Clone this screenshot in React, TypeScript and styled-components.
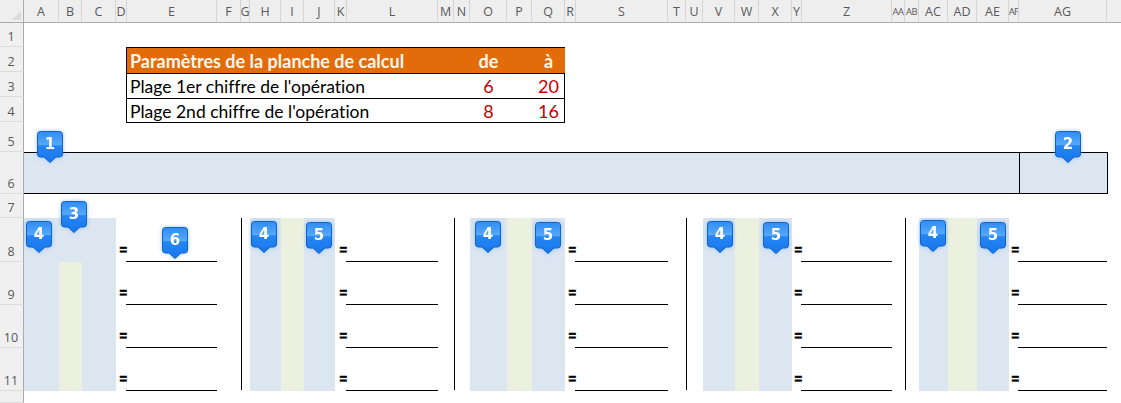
import { Fragment, useId } from "react";
import styled, { createGlobalStyle } from "styled-components";

const COLUMNS: [string, number][] = [
  ["A", 35], ["B", 23], ["C", 34], ["D", 11], ["E", 90], ["F", 24], ["G", 9], ["H", 31],
  ["I", 23], ["J", 31], ["K", 12], ["L", 91], ["M", 16], ["N", 16], ["O", 37], ["P", 25],
  ["Q", 33], ["R", 11], ["S", 92], ["T", 18], ["U", 17], ["V", 32], ["W", 24], ["X", 33],
  ["Y", 10], ["Z", 90], ["AA", 13], ["AB", 14], ["AC", 29], ["AD", 29], ["AE", 32], ["AF", 10],
  ["AG", 88],
];

const ROWS: [string, number][] = [
  ["1", 24], ["2", 25], ["3", 25], ["4", 25], ["5", 30], ["6", 42], ["7", 24],
  ["8", 44], ["9", 43], ["10", 43], ["11", 43], ["12", 12],
];

// grid line index of a column letter (first track is the row header)
const col = (name: string) => COLUMNS.findIndex(([label]) => label === name) + 2;
// grid line index of a sheet row (first track is the column header)
const row = (n: number) => n + 1;

const BLOCKS = [
  { rule: null, first: "A", mid: "B", last: "C", eq: "D", line: "E" },
  { rule: "G", first: "H", mid: "I", last: "J", eq: "K", line: "L" },
  { rule: "N", first: "O", mid: "P", last: "Q", eq: "R", line: "S" },
  { rule: "U", first: "V", mid: "W", last: "X", eq: "Y", line: "Z" },
  { rule: "AB", first: "AC", mid: "AD", last: "AE", eq: "AF", line: "AG" },
];

const PINS = [
  { n: 1, x: 37, y: 131 }, { n: 2, x: 1055, y: 131 }, { n: 3, x: 61, y: 201 },
  { n: 4, x: 26, y: 221 }, { n: 6, x: 162, y: 227 },
  { n: 4, x: 251, y: 221 }, { n: 5, x: 306, y: 222 },
  { n: 4, x: 475, y: 221 }, { n: 5, x: 535, y: 222 },
  { n: 4, x: 707, y: 221 }, { n: 5, x: 763, y: 222 },
  { n: 4, x: 920, y: 220 }, { n: 5, x: 980, y: 222 },
];

const GlobalStyle = createGlobalStyle`
  html, body {
    margin: 0;
    background: #ffffff;
    overflow: hidden;
  }
`;

const Sheet = styled.div`
  position: relative;
  display: grid;
  width: 1121px;
  height: 403px;
  overflow: hidden;
  background: #ffffff;
  grid-template-columns: 24px ${COLUMNS.map(([, w]) => `${w}px`).join(" ")} 14px;
  grid-template-rows: 23px ${ROWS.map(([, h]) => `${h}px`).join(" ")};
`;

const Corner = styled.div`
  grid-column: 1;
  grid-row: 1;
  position: relative;
  background: #eeeeee;
  border-right: 1px solid #ababab;
  border-bottom: 1px solid #ababab;
  box-sizing: border-box;

  &::after {
    content: "";
    position: absolute;
    right: 2px;
    bottom: 2px;
    border-style: solid;
    border-width: 0 0 9px 9px;
    border-color: transparent transparent #dcdcdc transparent;
  }
`;

const ColumnHead = styled.div<{ $tight?: boolean }>`
  grid-row: 1;
  display: flex;
  align-items: center;
  justify-content: center;
  overflow: hidden;
  box-sizing: border-box;
  padding-top: 1px;
  background: #eeeeee;
  border-right: 1px solid #d4d4d4;
  border-bottom: 1px solid #ababab;
  font-family: "Open Sans", sans-serif;
  font-size: ${(p) => (p.$tight ? "9.5px" : "12.5px")};
  letter-spacing: ${(p) => (p.$tight ? "-0.6px" : "0")};
  color: #595959;
  white-space: nowrap;
`;

const HeadFiller = styled.div`
  grid-row: 1;
  background: #eeeeee;
  border-bottom: 1px solid #ababab;
`;

const RowHead = styled.div<{ $row: number }>`
  grid-column: 1;
  grid-row: ${(p) => p.$row};
  display: flex;
  align-items: flex-end;
  justify-content: center;
  box-sizing: border-box;
  padding: 0 1px 1px 0;
  background: #f0f0f0;
  border-right: 1px solid #ababab;
  border-bottom: 1px solid #dcdcdc;
  font-family: "Open Sans", sans-serif;
  font-size: 12.5px;
  color: #595959;
`;

const ParamTable = styled.div`
  grid-column: ${col("E")} / ${col("R")};
  grid-row: ${row(2)} / ${row(5)};
  display: grid;
  grid-template-columns: 343px 37px 25px 33px;
  grid-template-rows: 25px 25px 25px;
  align-self: start;
  height: 76px;
  margin-left: -1px;
  box-sizing: border-box;
  border: 1px solid #000000;
  font-family: Lato, "Open Sans", sans-serif;
  font-size: 17.5px;
  font-variant-ligatures: none;
  color: #000000;
`;

const TableTitle = styled.div`
  display: flex;
  align-items: center;
  padding-left: 3px;
  background: #e26b0a;
  color: #fff8ee;
  font-weight: 700;
  font-size: 18px;
  white-space: nowrap;
`;

const TableHead = styled.div`
  display: flex;
  align-items: center;
  justify-content: center;
  background: #e26b0a;
  color: #fff8ee;
  font-weight: 700;
  font-size: 18px;
`;

const TableFiller = styled.div`
  background: #e26b0a;
`;

const RowLabel = styled.div`
  display: flex;
  align-items: center;
  padding-left: 3px;
  border-top: 1px solid #000000;
  white-space: nowrap;
`;

const Bound = styled.div`
  display: flex;
  align-items: center;
  justify-content: center;
  border-top: 1px solid #000000;
  color: #c00000;
  font-size: 18px;
`;

const BoundEnd = styled(Bound)`
  justify-content: flex-end;
  padding-right: 6px;
`;

const Band = styled.div`
  grid-column: 2 / ${col("AG")};
  grid-row: ${row(6)};
  box-sizing: border-box;
  background: #dce6f1;
  border-top: 1px solid #000000;
  border-bottom: 1px solid #000000;
`;

const BandEnd = styled(Band)`
  grid-column: ${col("AG")};
  margin-right: -1px;
  border-left: 1px solid #000000;
  border-right: 1px solid #000000;
`;

const BlockRule = styled.div<{ $col: number }>`
  grid-column: ${(p) => p.$col};
  grid-row: ${row(8)} / ${row(12)};
  border-left: 1px solid #000000;
  height: 172px;
`;

const Shade = styled.div<{ $col: number; $from: number; $to?: number; $accent?: boolean }>`
  grid-column: ${(p) => p.$col};
  grid-row: ${(p) => p.$from} / ${(p) => p.$to ?? row(12)};
  background: ${(p) => (p.$accent ? "#ebf1de" : "#dce6f1")};
`;

const EqualSign = styled.div<{ $col: number; $row: number }>`
  grid-column: ${(p) => p.$col};
  grid-row: ${(p) => p.$row};
  display: flex;
  align-items: flex-end;
  justify-content: flex-end;
  padding: 0 0 5px 0;
  font-family: "Liberation Sans", sans-serif;
  font-weight: 700;
  font-size: 13px;
  line-height: 14px;
  -webkit-text-stroke: 0.6px #000000;
  color: #000000;
`;

const AnswerLine = styled.div<{ $col: number; $row: number }>`
  grid-column: ${(p) => p.$col};
  grid-row: ${(p) => p.$row};
  margin-left: -1px;
  border-bottom: 1px solid #000000;
`;

const PinBox = styled.div<{ $x: number; $y: number }>`
  position: absolute;
  left: ${(p) => p.$x}px;
  top: ${(p) => p.$y}px;
  width: 26px;
  height: 32px;
  filter: drop-shadow(0 0 2px rgba(90, 160, 240, 0.55));

  svg {
    display: block;
  }
`;

const PinDigit = styled.span`
  position: absolute;
  left: 0;
  top: 4px;
  width: 26px;
  text-align: center;
  font-family: "DejaVu Sans", sans-serif;
  font-weight: 700;
  font-size: 15px;
  line-height: 18px;
  color: #ffffff;
`;

const Pin = ({ n, x, y }: { n: number; x: number; y: number }) => {
  const id = useId();
  return (
    <PinBox $x={x} $y={y}>
      <svg width="26" height="32" viewBox="0 0 26 32">
        <defs>
          <linearGradient id={id} x1="0" y1="0" x2="0" y2="1">
            <stop offset="0" stopColor="#2f8df5" />
            <stop offset="0.42" stopColor="#55a8fb" />
            <stop offset="0.46" stopColor="#2585f3" />
            <stop offset="1" stopColor="#1877ec" />
          </linearGradient>
        </defs>
        <path
          d="M3.5 .5H22.5A3 3 0 0 1 25.5 3.5V23A3 3 0 0 1 22.5 26H19L13 31.5L7 26H3.5A3 3 0 0 1 .5 23V3.5A3 3 0 0 1 3.5 .5Z"
          fill={`url(#${id})`}
          stroke="#1263c6"
        />
      </svg>
      <PinDigit>{n}</PinDigit>
    </PinBox>
  );
};

export default function App() {
  return (
    <>
      <GlobalStyle />
      <Sheet>
        <Corner />
        {COLUMNS.map(([label, width]) => (
          <ColumnHead key={label} $tight={label.length > 1 && width < 15}>
            {label}
          </ColumnHead>
        ))}
        <HeadFiller />
        {ROWS.map(([label], i) => (
          <RowHead key={label} $row={i + 2}>
            {label === "12" ? "" : label}
          </RowHead>
        ))}

        <ParamTable>
          <TableTitle>Paramètres de la planche de calcul</TableTitle>
          <TableHead>de</TableHead>
          <TableFiller />
          <TableHead>à</TableHead>
          <RowLabel>Plage 1er chiffre de l'opération</RowLabel>
          <Bound>6</Bound>
          <Bound />
          <BoundEnd>20</BoundEnd>
          <RowLabel>Plage 2nd chiffre de l'opération</RowLabel>
          <Bound>8</Bound>
          <Bound />
          <BoundEnd>16</BoundEnd>
        </ParamTable>

        <Band />
        <BandEnd />

        {BLOCKS.map((b, i) => (
          <Fragment key={b.line}>
            {b.rule && <BlockRule $col={col(b.rule)} />}
            <Shade $col={col(b.first)} $from={row(8)} />
            {/* the first block only tints its middle column from row 9 on */}
            {i === 0 ? (
              <>
                <Shade $col={col(b.mid)} $from={row(8)} $to={row(9)} />
                <Shade $col={col(b.mid)} $from={row(9)} $accent />
              </>
            ) : (
              <Shade $col={col(b.mid)} $from={row(8)} $accent />
            )}
            <Shade $col={col(b.last)} $from={row(8)} />
            {[8, 9, 10, 11].map((r) => (
              <Fragment key={r}>
                <EqualSign $col={col(b.eq)} $row={row(r)}>=</EqualSign>
                <AnswerLine $col={col(b.line)} $row={row(r)} />
              </Fragment>
            ))}
          </Fragment>
        ))}

        {PINS.map((p) => (
          <Pin key={`${p.n}-${p.x}`} n={p.n} x={p.x} y={p.y} />
        ))}
      </Sheet>
    </>
  );
}
